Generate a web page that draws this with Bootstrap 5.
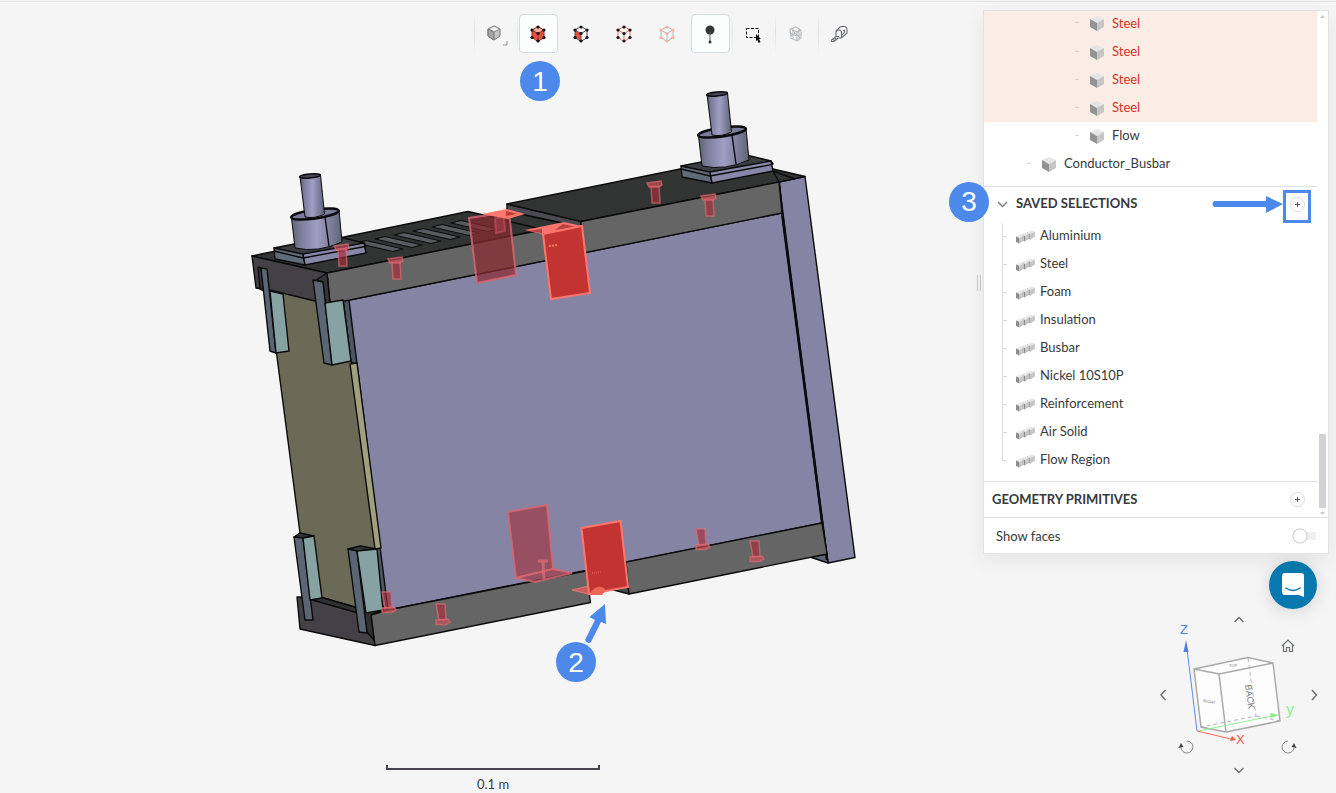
<!DOCTYPE html>
<html lang="en">
<head>
<meta charset="utf-8">
<meta name="viewport" content="width=device-width, initial-scale=1">
<title>Battery pack geometry</title>
<link href="https://cdn.jsdelivr.net/npm/bootstrap@5.3.0/dist/css/bootstrap.min.css" rel="stylesheet">
<style>
  :root { --accent: #4c89ea; --line: #e1e3e4; --ink: #37393c; }
  body { background: #f5f5f5; color: var(--ink); font-family: Lato, sans-serif; font-size: 13px; line-height: 20px; }
  .workspace { display: grid; grid-template-columns: minmax(0, 1fr) 352px; grid-template-rows: 56px auto 1fr; border-top: 1px solid transparent; box-shadow: inset 0 1px 0 #dfe3e5; }
  .tools { grid-column: 1 / -1; grid-row: 1; padding: 13px 2px 0 0; }
  .tool-cell { width: 43px; height: 39px; padding: 0 2px 0 1px; border-left: 1px solid transparent; }
  .tool-cell.split { border-image: linear-gradient(#f5f5f5, #dfe1e3, #f5f5f5) 1; }
  .tool { width: 39px; height: 39px; padding: 0 0 1px; border-radius: 4px; border: 1px solid transparent; background: none; }
  .tool.picked { background: #fcfdfd; border-color: #d4dae2; }
  .scene { grid-column: 1; grid-row: 2; }
  .scene svg { width: 100%; height: auto; }
  .ruler { grid-column: 1; grid-row: 3; padding: 5px 0 0 2px; }
  .ruler-bar { width: 214px; height: 5px; border: 2px solid #46444a; border-top: 0; }
  .side { grid-column: 2; grid-row: 1 / 4; padding: 9px 7px 0 0; }
  .tree-panel { background: #fff; border: 1px solid var(--line); box-shadow: 0 6px 20px rgba(0,0,0,.07); margin-left: -1px; }
  .tree-row { height: 28px; }
  .leaf { padding-bottom: 2px; }
  .tree-row a { color: inherit; text-decoration: none; }
  .clipped { height: 27px; }
  .clipped > * { position: relative; top: -1px; }
  .chosen { background: #fbece5; color: #d2322b; }
  .tick { width: 4px; height: 1px; background: #d4d8da; }
  .deep { padding-left: 91px; }
  .mid { padding-left: 43px; }
  .deep svg, .mid svg { margin: 2px 7px 0 10px; }
  .section { height: 35px; }
  .section.last { height: 36px; }
  .section h2 { font-size: 13px; line-height: 20px; font-weight: 700; margin: 0 0 2px; }
  .chevron { margin: 0 7px 0 12px; }
  .plus { width: 15px; height: 15px; padding: 0; border: 1px solid #d9dadb; border-radius: 50%; background: #fff; }
  .target { border: 3px solid var(--accent); width: 28px; height: 33px; margin: 4px 6px 0 0; padding-bottom: 3px; }
  .branch { margin-left: 18px; position: relative; }
  .branch::before { content: ""; position: absolute; left: 0; top: 2px; bottom: 12px; width: 1px; background: #dcdfe0; }
  .branch .tick { width: 5px; margin-top: 3px; }
  .branch svg { margin: 4px 5px 0 9px; }
  .scroller { width: 11px; padding: 4px 0 2px; }
  .thumb { width: 7px; height: 74px; background: #d1d2d5; }
  .num { width: 40px; height: 40px; background: var(--accent); color: #fff; font: 28px/40px "Liberation Sans", sans-serif; border-radius: 50%; }
  .num-three { left: -35px; top: -5px; }
  .grip { left: -7px; top: 264px; width: 4px; height: 16px; border: 1px solid #c8c8c8; border-width: 0 1px; }
  .form-switch.faces { min-height: 0; padding: 0; height: 36px; }
  .form-switch.faces input { appearance: none; width: 24px; height: 16px; margin: 0 12px 0 auto; background: radial-gradient(circle at 8px 8px, #fff 6px, #c9cacb 7px, transparent 8px), linear-gradient(#efefef, #efefef) 8px 4px / 16px 8px no-repeat; border: 0; border-radius: 8px; }
  .chat { width: 48px; height: 48px; padding: 0; border: 0; border-radius: 50%; background: #0779ae; box-shadow: 0 2px 18px rgba(0,0,0,.14); margin: 7px 12px 0 0; }
  .compass { display: grid; grid-template-columns: 16px 135px 16px; grid-template-rows: 16px 135px 16px; margin: 2px 7px 0 0; place-items: center; }
  .compass button { width: 16px; height: 16px; padding: 0; border: 0; background: none; display: flex; }
  .tilt-up { grid-area: 1 / 2; } .tilt-down { grid-area: 3 / 2; } .turn-left { grid-area: 2 / 1; } .turn-right { grid-area: 2 / 3; }
  .orbit { position: relative; width: 135px; height: 135px; grid-area: 2 / 2; }
  .orbit > svg { overflow: visible; display: block; }
  .orbit button { position: absolute; }
  .home { left: 109px; top: 11px; }
  .roll-l { left: 7px; top: 112px; }
  .roll-r { left: 110px; top: 112px; }
</style>
</head>
<body>
<svg width="0" height="0" class="position-absolute" aria-hidden="true">
  <defs>
    <symbol id="solid" viewBox="0 0 16 17"><path d="M8 1 15 4 8 8 1 4z" fill="#e6e6e6"/><path d="M1 4 8 8V16L1 12z" fill="#939393"/><path d="M15 4 8 8V16L15 12z" fill="#c6c6c6"/></symbol>
    <symbol id="group" viewBox="0 0 19 14">
      <g id="bit"><path d="M11 2.500 15 .5 19 1.500 15 4z" fill="#eaeaea"/><path d="M11 2.500 14.500 4V9.500L11 8z" fill="#8c8c8c"/><path d="M14.500 4 19 1.500V6.500L14.500 9.500z" fill="#c6c6c6"/></g>
      <use href="#bit" x="-5.500" y="2"/><use href="#bit" x="-11" y="4"/>
    </symbol>
    <symbol id="frame" viewBox="0 0 18 18"><path d="M9 1.500 15 5V12.500L9 16.500 3 12.500V5zM3 5 9 8.500 15 5M9 8.500V16" fill="none" stroke="currentColor"/></symbol>
    <symbol id="dots" viewBox="0 0 18 18"><g fill="currentColor"><circle cx="9" cy="2" r="1.600"/><circle cx="15" cy="5" r="1.600"/><circle cx="15" cy="12.500" r="1.600"/><circle cx="9" cy="16" r="1.600"/><circle cx="3" cy="12.500" r="1.600"/><circle cx="3" cy="5" r="1.600"/><circle cx="9" cy="8.500" r="1.600"/></g></symbol>
    <linearGradient id="round"><stop offset="0" stop-color="#5c6470"/><stop offset=".2" stop-color="#817fa0"/><stop offset=".5" stop-color="#a09ec2"/><stop offset=".72" stop-color="#8583a5"/><stop offset="1" stop-color="#5d6672"/></linearGradient>
  </defs>
</svg>

<main class="workspace min-vh-100">
  <div class="tools d-flex justify-content-center" role="toolbar" aria-label="View tools">
    <div class="tool-cell split"><button class="tool" aria-label="Render mode"><svg width="32" height="28" viewBox="0 0 32 28"><path d="M15 7 21 10V17L15 21 9 17V10z" fill="#c4c4c4" stroke="#777"/><path d="M15 7 21 10 15 13 9 10z" fill="#ececec" stroke="#888"/><path d="M9 10 15 13V21L9 17z" fill="#a4a4a4" stroke="#777"/><path d="M28 22V26H24" fill="none" stroke="#999"/></svg></button></div>
    <div class="tool-cell split"><button class="tool picked" aria-label="Pick volumes"><svg width="18" height="18"><path d="M9 2 15 5V12.500L9 16 3 12.500V5z" fill="#e8503f"/><path d="M9 2 15 5 9 8.500 3 5z" fill="#f4aa9f"/><use href="#frame" color="#843029"/><use href="#dots" color="#111"/></svg></button></div>
    <div class="tool-cell"><button class="tool" aria-label="Pick faces"><svg width="18" height="18"><path d="M3 5 9 8.500V16L3 12.500z" fill="#e8503f"/><use href="#frame" color="#555"/><use href="#dots" color="#111"/></svg></button></div>
    <div class="tool-cell"><button class="tool" aria-label="Pick edges"><svg width="18" height="18"><use href="#frame" color="#ee7163"/><use href="#dots" color="#111"/></svg></button></div>
    <div class="tool-cell"><button class="tool" aria-label="Pick nodes"><svg width="18" height="18"><use href="#frame" color="#b8b8b8"/><use href="#dots" color="#f7b3a5"/></svg></button></div>
    <div class="tool-cell"><button class="tool picked" aria-label="Probe"><svg width="18" height="20"><circle cx="9" cy="6" r="4.500" fill="#343638"/><path d="M9 8V18" stroke="#55585b"/><circle cx="9" cy="18" r="1.500" fill="#343638"/></svg></button></div>
    <div class="tool-cell split"><button class="tool" aria-label="Box select"><svg width="18" height="18"><path d="M2.500 3.500H14.500V12.500H2.500z" fill="none" stroke="#111" stroke-dasharray="3 1.500"/><path d="M12 9 17 14H15L16.500 17 14.500 18 13.500 15 12 16z" fill="#111"/></svg></button></div>
    <div class="tool-cell split"><button class="tool" aria-label="Hide selection"><svg width="18" height="18" fill="none" stroke="#bfc3c6"><path d="M3 4 9 2 14 5V13L10 16 4 13zM3 4 10 7 14 5M10 7V16M6 3V14M3 8 10 11 15 9M12 3V14" stroke-width="1.200"/><path d="M4 11 13 4M5 5 13 13" stroke="#a9adb0" stroke-dasharray="2 1"/></svg></button></div>
    <div class="tool-cell split"><button class="tool" aria-label="Measure"><svg width="18" height="18" fill="none" stroke="#6c6e71" stroke-width="1.100"><path d="M6 11V6L10 2Q12 1 15 1.500Q17 2 17 5V8L11.500 13H8L4 16.500H1.500V15L6 11.500H9M11.500 13V8Q11.500 5 9 5Q7 5 6 7M3 14.500 5 16M5 13 7 15M13 6Q15 4 14.500 7L12 10"/></svg></button></div>
  </div>

  <div class="scene">
    <svg viewBox="0 57 984 703" class="d-block" role="img" aria-label="Battery pack model with four steel parts selected">
      <g stroke="#0b0b0b" stroke-width="1.400" stroke-linejoin="round">
        <path d="M268 288 330 300 357 362 383 608 357 609 320 598 300 533z" fill="#6b6a57"/>
        <path d="M343 298 349 298 390 610 383 610 376 549 381 548 357 364 351 362z" fill="#4e5563"/>
        <path d="M779 182 805 176.500 855 557.500 828 563z" fill="#8684a4"/>
        <path d="M810 557 827 554 828 563z" fill="#596572"/>
        <path d="M349 300 782 213 822 523 388 610z" fill="#8684a4"/>
        <path d="M350 364 357 363 381 548 375 549z" fill="#a0a07d"/>
        <path d="M779 182 782 213 827 560" fill="none" stroke-width="2.400"/>
        <!-- lid -->
        <path d="M252 256 468 211.500 545 229 327 273z" fill="#323433"/>
        <path d="M507 211 581 227 545 230 490 217z" fill="#323433"/>
        <path d="M507 204 581 221V227L507 211z" fill="#4b4951"/>
        <path d="M507 204 700 165 773 169 805 176.500 779 182 581 221.500z" fill="#323433"/>
        <path d="M779 182 773 171 795 179" fill="none"/>
        <path d="M327 273 547 229 581 226V221.500L779 182 782 213 330 304z" fill="#656565"/>
        <path d="M252 256 327 273 330 304 325 303 315 301 270 290 256 288z" fill="#434046"/>
        <path d="M316 280 323 282 325 303 330 304 327 273z" fill="#36343a"/>
        <g fill="#5a5b60" stroke-width="1.200">
          <path id="slot" d="M356 243 366 240.500 403 249 393 251.500z"/>
          <use href="#slot" x="19" y="-4"/><use href="#slot" x="38" y="-8"/><use href="#slot" x="57" y="-12"/><use href="#slot" x="76" y="-16"/><use href="#slot" x="95" y="-20"/>
        </g>
        <!-- base -->
        <path d="M297 597 320 597 358 608 371 615 375 645.500 300 629z" fill="#434046"/>
        <path d="M309 599 320 597 358 608V613z" fill="#303231"/>
        <path d="M371 615 388 610 586 571 590.500 602.500 375 645.500z" fill="#656565"/>
        <path d="M364 612 383 610 371 615 374 640 367 632z" fill="#303231"/>
        <path d="M610 589 628 585 629 594z" fill="#454b54"/>
        <path d="M626 562 822 523 827 554 629 594z" fill="#656565"/>
        <!-- corner brackets -->
        <path d="M258 267 261 268 264 291 260 289z" fill="#36343a"/>
        <path d="M261 268 267 269 276 353 270 351z" fill="#5a6673"/><path d="M270 291 283 294 289 351 276 353z" fill="#87a2a2"/>
        <path d="M313 280 323 282 332 365 324 363z" fill="#5a6673"/><path d="M325 303 343 300 351 361 332 365z" fill="#87a2a2"/>
        <path d="M294 537 300 533 314 536 303 538z" fill="#30373b"/><path d="M294 537 303 538 313 620 305 620z" fill="#5a6673"/><path d="M303 538 314 536 322 598 310 600z" fill="#87a2a2"/>
        <path d="M348 549 360 546 377 549 357 551z" fill="#30373b"/><path d="M348 549 357 551 367 633 359 632z" fill="#5a6673"/><path d="M357 551 377 549 383 610 366 613z" fill="#87a2a2"/>
        <!-- terminal -->
        <g id="terminal">
          <path d="M274 248 335 236 364 243 366 246 303 257z" fill="#3c3e43"/>
          <path d="M274 248 303 254 305 265 275 259z" fill="#5f6b78"/>
          <path d="M303 254 364 243 366 253 305 265z" fill="#8987a8"/>
          <path d="M274 251 303 258 365 246.500" fill="none"/>
          <path d="M291.500 218 295 248Q318 253 342 242L339 210z" fill="url(#round)" stroke-width="1"/>
          <ellipse cx="315" cy="214" rx="24" ry="4.500" transform="rotate(-8 315 214)" fill="#7d7b9b" stroke-width="2.500"/>
          <path d="M300 176.500 305 217Q315 219 324.500 214L320.500 175z" fill="url(#round)" stroke-width="1"/>
          <ellipse cx="310" cy="176" rx="10.500" ry="2" transform="rotate(-5 310 176)" fill="#454651"/>
          <path d="M325 217 329 246"/>
        </g>
        <use href="#terminal" x="407" y="-82"/>
      </g>
      <!-- selected parts -->
      <g fill="#a42f3b" fill-opacity=".68" stroke="#e06d73" stroke-opacity=".65" stroke-width="1.500">
        <g id="bolt"><path d="M338 249H346L347 266H339z"/><path d="M334 246 348 244 349 248 346 250H336z" fill="#c95058"/></g>
        <use href="#bolt" x="54" y="13"/><use href="#bolt" x="313" y="-63"/><use href="#bolt" x="367" y="-50"/>
        <g id="bolt-up"><path d="M382 592H391L392 608H385z"/><path d="M382 608 394 607 396 610 392 612.500H382z" fill="#c95058"/></g>
        <use href="#bolt-up" x="54" y="12"/><use href="#bolt-up" x="314" y="-63"/><use href="#bolt-up" x="368" y="-51"/>
      </g>
      <g fill="#9e3c46" fill-opacity=".72" stroke="#d96872" stroke-opacity=".8" stroke-width="2">
        <path d="M469 218 509 212 516 275 477 283z" fill="#8a2b33"/><path d="M495 218 504 217 505 231 496 233z" stroke-opacity=".4"/>
        <path d="M508 512 547 505 553 569 516 578z"/><path d="M516 578 553 569 572 573 535 582z"/>
        <path d="M538 561H548M543 562 544 579" stroke-width="3"/>
      </g>
      <path d="M482 214 507 209 525 214 508 219z" fill="#ff776d"/><path d="M506 211 517 214 506 216z" fill="#c03b36"/>
      <path d="M525 230 564 222 582 226 542 234z" fill="#fa756c"/><path d="M528 231 542 229 542 233zM563 224 576 227 555 230z" fill="#b9413e"/>
      <path d="M543 234 582 226 590 293 551 299z" fill="#c13431" stroke="#ff766c" stroke-width="2"/>
      <path d="M549 246 558 245" stroke="#e97954" stroke-width="2" stroke-dasharray="2 1"/>
      <path d="M572 590 589 586 592 595z" fill="#c5605f" stroke="#e77773"/>
      <path d="M581.500 528 620.500 521 628 587 589 594z" fill="#c13431" stroke="#ff766c" stroke-width="2"/>
      <path d="M591 591Q600 583 606 590L602 595H592z" fill="#ee6556"/><path d="M592 573 602 572" stroke="#df5547" stroke-width="2" stroke-dasharray="1 1"/>
      <!-- call-outs -->
      <g fill="#4c89ea"><circle cx="540" cy="81" r="20"/><circle cx="576" cy="662" r="20"/>
      <path d="M605 604 589.500 617 595 620 585 640Q588 645 591 642L601 622 606 624z"/></g>
      <g fill="#fff" font-family="Liberation Sans, sans-serif" font-size="28" text-anchor="middle"><text x="540" y="91">1</text><text x="576" y="672">2</text></g>
    </svg>
  </div>

  <div class="ruler d-flex flex-column align-items-center"><div class="ruler-bar"></div><div class="mt-1">0.1 m</div></div>

  <aside class="side d-flex flex-column align-items-end">
    <section class="tree-panel position-relative align-self-stretch">
      <div class="d-flex">
        <div class="flex-grow-1">
          <div class="tree-row leaf clipped chosen deep d-flex align-items-center"><i class="tick"></i><svg width="16" height="17"><use href="#solid"/></svg><a href="#">Steel</a></div>
          <div class="tree-row leaf chosen deep d-flex align-items-center"><i class="tick"></i><svg width="16" height="17"><use href="#solid"/></svg><a href="#">Steel</a></div>
          <div class="tree-row leaf chosen deep d-flex align-items-center"><i class="tick"></i><svg width="16" height="17"><use href="#solid"/></svg><a href="#">Steel</a></div>
          <div class="tree-row leaf chosen deep d-flex align-items-center"><i class="tick"></i><svg width="16" height="17"><use href="#solid"/></svg><a href="#">Steel</a></div>
          <div class="tree-row leaf deep d-flex align-items-center"><i class="tick"></i><svg width="16" height="17"><use href="#solid"/></svg><a href="#">Flow</a></div>
          <div class="tree-row leaf mid d-flex align-items-center"><i class="tick"></i><svg width="16" height="17"><use href="#solid"/></svg><a href="#">Conductor_Busbar</a></div>
          <div class="section position-relative d-flex align-items-center border-top mt-2">
            <svg width="13" height="8" class="chevron"><path d="M2 2 6.500 6.500 11 2" fill="none" stroke="#777a7d" stroke-width="1.300"/></svg>
            <h2>SAVED SELECTIONS</h2>
            <svg class="ms-auto" width="71" height="20" aria-hidden="true"><path d="M2 7H54V2L71 10 54 19V13H2Q-1 10 2 7z" fill="#4c89ea"/></svg>
            <div class="target d-flex align-items-center justify-content-center"><button class="plus d-flex align-items-center justify-content-center" aria-label="Add selection"><svg width="7" height="7"><path d="M3.500 1V6M1 3.500H6" stroke="#555"/></svg></button></div>
            <div class="num num-three position-absolute text-center">3</div>
          </div>
          <div class="branch">
            <div class="tree-row d-flex align-items-center"><i class="tick"></i><svg width="19" height="14"><use href="#group"/></svg><a href="#">Aluminium</a></div>
            <div class="tree-row d-flex align-items-center"><i class="tick"></i><svg width="19" height="14"><use href="#group"/></svg><a href="#">Steel</a></div>
            <div class="tree-row d-flex align-items-center"><i class="tick"></i><svg width="19" height="14"><use href="#group"/></svg><a href="#">Foam</a></div>
            <div class="tree-row d-flex align-items-center"><i class="tick"></i><svg width="19" height="14"><use href="#group"/></svg><a href="#">Insulation</a></div>
            <div class="tree-row d-flex align-items-center"><i class="tick"></i><svg width="19" height="14"><use href="#group"/></svg><a href="#">Busbar</a></div>
            <div class="tree-row d-flex align-items-center"><i class="tick"></i><svg width="19" height="14"><use href="#group"/></svg><a href="#">Nickel 10S10P</a></div>
            <div class="tree-row d-flex align-items-center"><i class="tick"></i><svg width="19" height="14"><use href="#group"/></svg><a href="#">Reinforcement</a></div>
            <div class="tree-row d-flex align-items-center"><i class="tick"></i><svg width="19" height="14"><use href="#group"/></svg><a href="#">Air Solid</a></div>
            <div class="tree-row d-flex align-items-center"><i class="tick"></i><svg width="19" height="14"><use href="#group"/></svg><a href="#">Flow Region</a></div>
          </div>
          <div class="section last d-flex align-items-center border-top mt-2 ps-2 pe-2">
            <h2>GEOMETRY PRIMITIVES</h2>
            <button class="plus d-flex align-items-center justify-content-center ms-auto me-1" aria-label="Add primitive"><svg width="7" height="7"><path d="M3.500 1V6M1 3.500H6" stroke="#555"/></svg></button>
          </div>
        </div>
        <div class="scroller d-flex flex-column align-items-center" aria-hidden="true">
          <svg width="5" height="3"><path d="M0 3 2.500 0 5 3z" fill="#c5c9cc"/></svg>
          <div class="thumb mt-auto mb-1"></div>
          <svg width="5" height="3"><path d="M0 0 2.500 3 5 0z" fill="#c5c9cc"/></svg>
        </div>
      </div>
      <div class="form-switch faces d-flex align-items-center border-top"><label for="faces" class="ms-2 ps-1">Show faces</label><input type="checkbox" id="faces" role="switch"></div>
      <div class="grip position-absolute" aria-hidden="true"></div>
    </section>

    <button class="chat" aria-label="Open chat"><svg width="22" height="24"><path d="M3 0H19Q22 0 22 3V24L17 22H3Q0 22 0 19V3Q0 0 3 0z" fill="#fff"/><path d="M4 15Q11 20 18 15" fill="none" stroke="#0779ae" stroke-width="1.500" stroke-linecap="round"/></svg></button>

    <div class="compass">
      <button class="tilt-up" aria-label="Tilt up"><svg width="16" height="16"><path d="M3.500 11 8 6.500 12.500 11" fill="none" stroke="#6d6f71" stroke-width="1.400"/></svg></button>
      <button class="turn-left" aria-label="Turn left"><svg width="16" height="16"><path d="M10.500 3 6 8 10.500 13" fill="none" stroke="#6d6f71" stroke-width="1.400"/></svg></button>
      <button class="turn-right" aria-label="Turn right"><svg width="16" height="16"><path d="M6 3 10.500 8 6 13" fill="none" stroke="#6d6f71" stroke-width="1.400"/></svg></button>
      <button class="tilt-down" aria-label="Tilt down"><svg width="16" height="16"><path d="M3.500 6 8 10.500 12.500 6" fill="none" stroke="#6d6f71" stroke-width="1.400"/></svg></button>
      <div class="orbit">
        <svg width="135" height="135" viewBox="1171 626 135 135">
          <path d="M1194 668 1248 656.500 1273 662 1280 720 1226 731 1201 726z" fill="#fdfdfd"/>
          <g fill="none" stroke="#b5b5b5" stroke-dasharray="4 3"><path d="M1248 657 1256 715 1201 726M1256 715 1280 720"/></g>
          <path d="M1194 668 1248 656.500 1273 662 1280 720 1226 731 1201 726zM1194 668 1219 673 1226 731M1219 673 1273 662" fill="none" stroke="#aaa" stroke-width="1.500"/>
          <path d="M1197 730 1187 648" stroke="#5b8cf0"/><path d="M1186 639 1183.500 651H1188.500z" fill="#4c7fe8"/>
          <path d="M1198 730 1272 715" stroke="#90f090"/><path d="M1279 714 1270 712 1271 717z" fill="#86ef86"/>
          <path d="M1197 730 1231 738" stroke="#f0695a"/><path d="M1236 739 1230 740 1232 735z" fill="#ee5847"/>
          <g font-family="Liberation Sans, sans-serif" font-size="13"><text x="1180" y="633" fill="#4c7fe8">Z</text><text x="1236" y="743" fill="#ee5847">X</text><text x="1286" y="714" fill="#8cf08c" font-size="16">y</text></g>
          <g font-family="Liberation Sans, sans-serif" fill="#777b80"><text transform="translate(1245 684) rotate(82)" font-size="9">BACK</text><text transform="translate(1203 701) rotate(10)" font-size="4">RIGHT</text><text x="1229" y="666" font-size="4">TOP</text></g>
        </svg>
        <button class="home" aria-label="Home view"><svg width="16" height="16"><path d="M2 8 8 2 14 8M3.500 7V13.500H6.500V9.500H9.500V13.500H12.500V7" fill="none" stroke="#6d6f71" stroke-width="1.200"/></svg></button>
        <button class="roll-l" aria-label="Roll left"><svg width="16" height="16"><path d="M9 2A6 6 0 1 1 3 9" fill="none" stroke="#85878a"/><path d="M.500 9 3 4 5.500 8z" fill="#444"/></svg></button>
        <button class="roll-r" aria-label="Roll right"><svg width="16" height="16"><path d="M7 2A6 6 0 1 0 13 9" fill="none" stroke="#85878a"/><path d="M15.500 9 13 4 10.500 8z" fill="#444"/></svg></button>
      </div>
    </div>
  </aside>
</main>
<script src="https://cdn.jsdelivr.net/npm/bootstrap@5.3.0/dist/js/bootstrap.bundle.min.js"></script>
</body>
</html>
